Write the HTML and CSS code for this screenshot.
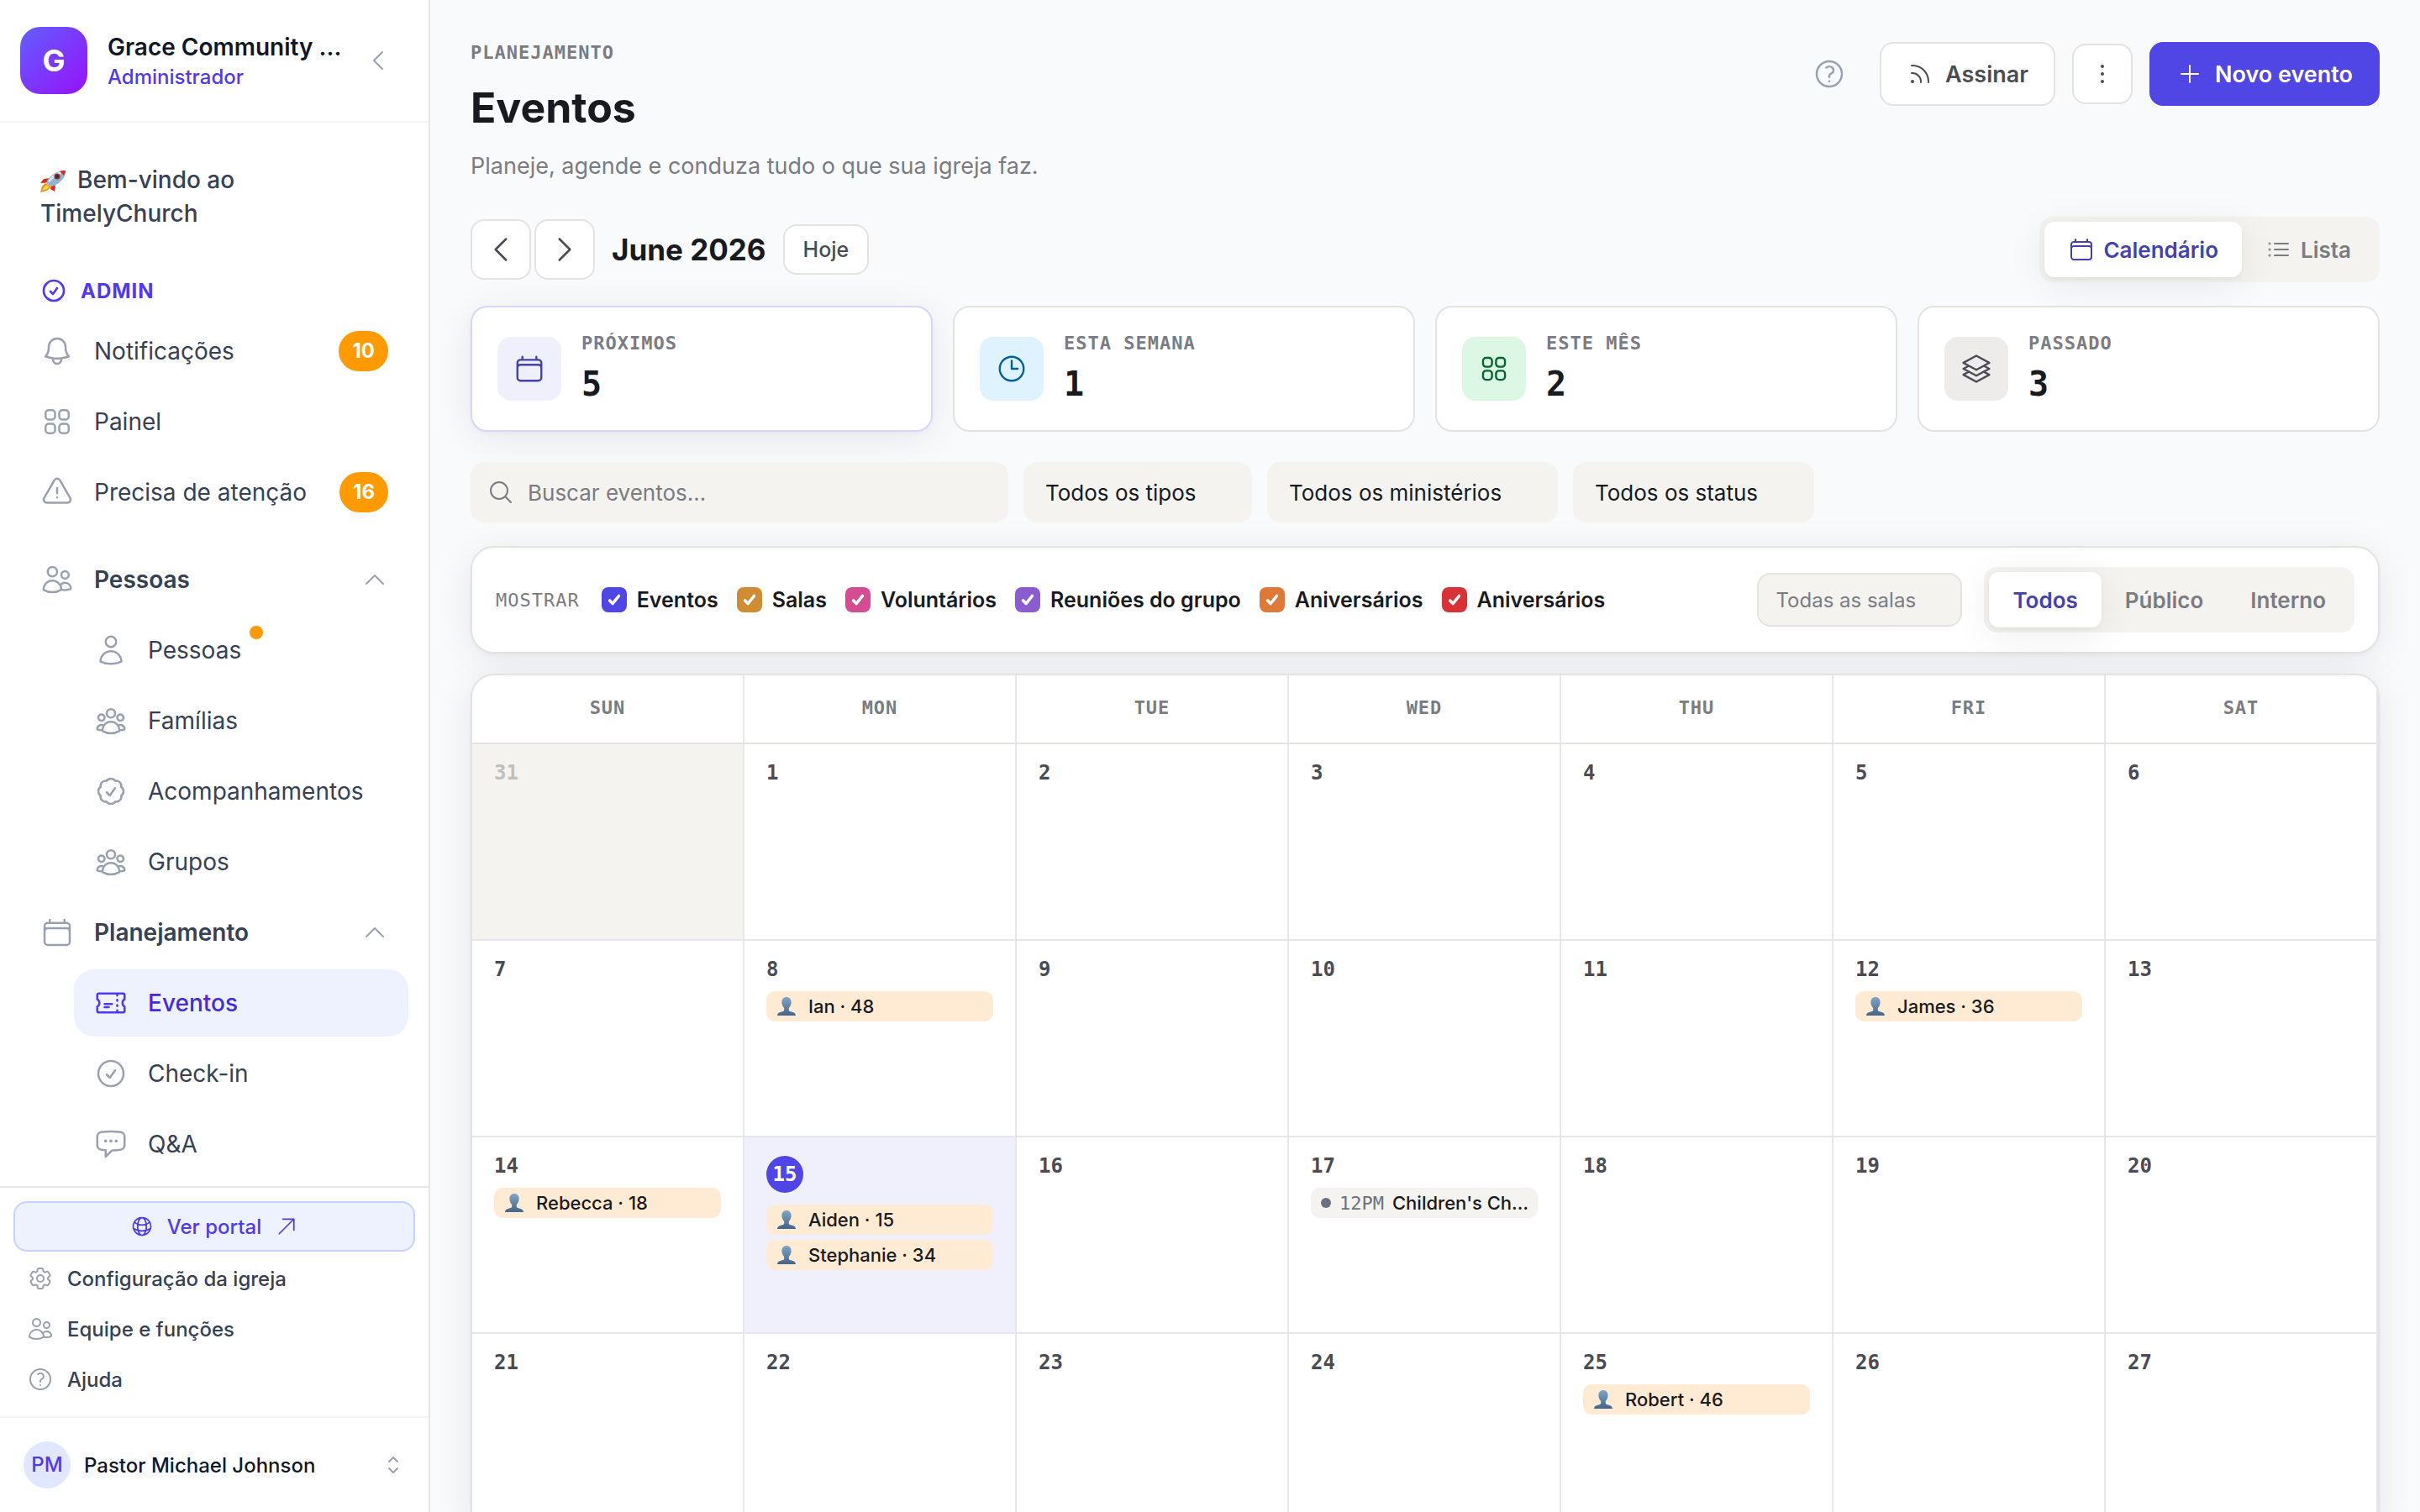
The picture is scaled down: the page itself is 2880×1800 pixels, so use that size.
FILE: index.html
```html
<!DOCTYPE html>
<html lang="pt-BR">
<head>
    <meta charset="UTF-8">
    <meta name="viewport" content="width=device-width, initial-scale=1.0">
    <title>Eventos</title>
    <link rel="stylesheet" href="styles.css">
</head>

<body>

    <!-- icon sprite -->
    <svg class="sprite" aria-hidden="true">
        <symbol id="i-bell" viewBox="0 0 24 24"><path d="M14.857 17.082a23.848 23.848 0 0 0 5.454-1.31A8.967 8.967 0 0 1 18 9.75V9A6 6 0 0 0 6 9v.75a8.967 8.967 0 0 1-2.312 6.022c1.733.64 3.56 1.085 5.455 1.31m5.714 0a24.255 24.255 0 0 1-5.714 0m5.714 0a3 3 0 1 1-5.714 0"/></symbol>
        <symbol id="i-grid" viewBox="0 0 24 24"><rect x="3.75" y="3.75" width="6.75" height="6.75" rx="2.25"/><rect x="13.5" y="3.75" width="6.75" height="6.75" rx="2.25"/><rect x="3.75" y="13.5" width="6.75" height="6.75" rx="2.25"/><rect x="13.5" y="13.5" width="6.75" height="6.75" rx="2.25"/></symbol>
        <symbol id="i-alert" viewBox="0 0 24 24"><path d="M12 9v3.75m-9.303 3.376c-.866 1.5.217 3.374 1.948 3.374h14.71c1.73 0 2.813-1.874 1.948-3.374L13.949 3.378c-.866-1.5-3.032-1.5-3.898 0L2.697 16.126ZM12 15.75h.007v.008H12v-.008Z"/></symbol>
        <symbol id="i-users" viewBox="0 0 24 24"><path d="M15 19.128a9.38 9.38 0 0 0 2.625.372 9.337 9.337 0 0 0 4.121-.952 4.125 4.125 0 0 0-7.533-2.493M15 19.128v-.003c0-1.113-.285-2.16-.786-3.07M15 19.128v.106A12.318 12.318 0 0 1 8.624 21c-2.331 0-4.512-.645-6.374-1.766l-.001-.109a6.375 6.375 0 0 1 11.964-3.07M12 6.375a3.375 3.375 0 1 1-6.75 0 3.375 3.375 0 0 1 6.75 0Zm8.25 2.25a2.625 2.625 0 1 1-5.25 0 2.625 2.625 0 0 1 5.25 0Z"/></symbol>
        <symbol id="i-user" viewBox="0 0 24 24"><path d="M15.75 6a3.75 3.75 0 1 1-7.5 0 3.75 3.75 0 0 1 7.5 0ZM4.501 20.118a7.5 7.5 0 0 1 14.998 0A17.933 17.933 0 0 1 12 21.75c-2.676 0-5.216-.584-7.499-1.632Z"/></symbol>
        <symbol id="i-group" viewBox="0 0 24 24"><path d="M18 18.72a9.094 9.094 0 0 0 3.741-.479 3 3 0 0 0-4.682-2.72m.94 3.198.001.031c0 .225-.012.447-.037.666A11.944 11.944 0 0 1 12 21c-2.17 0-4.207-.576-5.963-1.584A6.062 6.062 0 0 1 6 18.719m12 0a5.971 5.971 0 0 0-.941-3.197m0 0A5.995 5.995 0 0 0 12 12.75a5.995 5.995 0 0 0-5.058 2.772m0 0a3 3 0 0 0-4.681 2.72 8.986 8.986 0 0 0 3.74.477m.94-3.197a5.971 5.971 0 0 0-.94 3.197M15 6.75a3 3 0 1 1-6 0 3 3 0 0 1 6 0Zm6 3a2.25 2.25 0 1 1-4.5 0 2.25 2.25 0 0 1 4.5 0Zm-13.5 0a2.25 2.25 0 1 1-4.5 0 2.25 2.25 0 0 1 4.5 0Z"/></symbol>
        <symbol id="i-badge" viewBox="0 0 24 24"><path d="M9 12.75 11.25 15 15 9.75M21 12c0 1.268-.63 2.39-1.593 3.068a3.745 3.745 0 0 1-1.043 3.296 3.745 3.745 0 0 1-3.296 1.043A3.745 3.745 0 0 1 12 21c-1.268 0-2.39-.63-3.068-1.593a3.746 3.746 0 0 1-3.296-1.043 3.745 3.745 0 0 1-1.043-3.296A3.745 3.745 0 0 1 3 12c0-1.268.63-2.39 1.593-3.068a3.745 3.745 0 0 1 1.043-3.296 3.746 3.746 0 0 1 3.296-1.043A3.746 3.746 0 0 1 12 3c1.268 0 2.39.63 3.068 1.593a3.746 3.746 0 0 1 3.296 1.043 3.746 3.746 0 0 1 1.043 3.296A3.745 3.745 0 0 1 21 12Z"/></symbol>
        <symbol id="i-calendar" viewBox="0 0 24 24"><path d="M6.75 3v2.25M17.25 3v2.25M3 18.75V7.5a2.25 2.25 0 0 1 2.25-2.25h13.5A2.25 2.25 0 0 1 21 7.5v11.25m-18 0A2.25 2.25 0 0 0 5.25 21h13.5A2.25 2.25 0 0 0 21 18.75m-18 0v-7.5A2.25 2.25 0 0 1 5.25 9h13.5A2.25 2.25 0 0 1 21 11.25v7.5"/></symbol>
        <symbol id="i-ticket" viewBox="0 0 24 24"><path d="M16.5 6v.75m0 3v.75m0 3v.75m0 3V18m-9-5.25h5.25M7.5 15h3M3.375 5.25c-.621 0-1.125.504-1.125 1.125v3.026a2.999 2.999 0 0 1 0 5.198v3.026c0 .621.504 1.125 1.125 1.125h17.25c.621 0 1.125-.504 1.125-1.125v-3.026a2.999 2.999 0 0 1 0-5.198V6.375c0-.621-.504-1.125-1.125-1.125H3.375Z"/></symbol>
        <symbol id="i-check" viewBox="0 0 24 24"><path d="M9 12.75 11.25 15 15 9.75M21 12a9 9 0 1 1-18 0 9 9 0 0 1 18 0Z"/></symbol>
        <symbol id="i-chat" viewBox="0 0 24 24"><path d="M8.625 9.75a.375.375 0 1 1-.75 0 .375.375 0 0 1 .75 0Zm0 0H8.25m4.125 0a.375.375 0 1 1-.75 0 .375.375 0 0 1 .75 0Zm0 0H12m4.125 0a.375.375 0 1 1-.75 0 .375.375 0 0 1 .75 0Zm0 0h-.375m-13.5 3.01c0 1.6 1.123 2.994 2.707 3.227 1.087.16 2.185.283 3.293.369V21l4.184-4.183a1.14 1.14 0 0 1 .778-.332 48.294 48.294 0 0 0 5.83-.498c1.585-.233 2.708-1.626 2.708-3.228V6.741c0-1.602-1.123-2.995-2.707-3.228A48.394 48.394 0 0 0 12 3c-2.392 0-4.744.175-7.043.513C3.373 3.746 2.25 5.14 2.25 6.741v6.018Z"/></symbol>
        <symbol id="i-globe" viewBox="0 0 24 24"><path d="M12 21a9.004 9.004 0 0 0 8.716-6.747M12 21a9.004 9.004 0 0 1-8.716-6.747M12 21c2.485 0 4.5-4.03 4.5-9S14.485 3 12 3m0 18c-2.485 0-4.5-4.03-4.5-9S9.515 3 12 3m0 0a8.997 8.997 0 0 1 7.843 4.582M12 3a8.997 8.997 0 0 0-7.843 4.582m15.686 0A11.953 11.953 0 0 1 12 10.5c-2.998 0-5.74-1.1-7.843-2.918m15.686 0A8.959 8.959 0 0 1 21 12c0 .778-.099 1.533-.284 2.253m0 0A17.919 17.919 0 0 1 12 16.5c-3.162 0-6.133-.815-8.716-2.247m0 0A9.015 9.015 0 0 1 3 12c0-1.605.42-3.113 1.157-4.418"/></symbol>
        <symbol id="i-arrow" viewBox="0 0 24 24"><path d="m4.5 19.5 15-15m0 0H8.25m11.25 0v11.25"/></symbol>
        <symbol id="i-cog" viewBox="0 0 24 24"><path d="M9.594 3.94c.09-.542.56-.94 1.11-.94h2.593c.55 0 1.02.398 1.11.94l.213 1.281c.063.374.313.686.645.87.074.04.147.083.22.127.325.196.72.257 1.075.124l1.217-.456a1.125 1.125 0 0 1 1.37.49l1.296 2.247a1.125 1.125 0 0 1-.26 1.431l-1.003.827c-.293.241-.438.613-.43.992a7.723 7.723 0 0 1 0 .255c-.008.378.137.75.43.991l1.004.827c.424.35.534.955.26 1.43l-1.298 2.247a1.125 1.125 0 0 1-1.369.491l-1.217-.456c-.355-.133-.75-.072-1.076.124a6.47 6.47 0 0 1-.22.128c-.331.183-.581.495-.644.869l-.213 1.281c-.09.543-.56.94-1.11.94h-2.594c-.55 0-1.019-.398-1.11-.94l-.213-1.281c-.062-.374-.312-.686-.644-.87a6.52 6.52 0 0 1-.22-.127c-.325-.196-.72-.257-1.076-.124l-1.217.456a1.125 1.125 0 0 1-1.369-.49l-1.297-2.247a1.125 1.125 0 0 1 .26-1.431l1.004-.827c.292-.24.437-.613.43-.991a6.932 6.932 0 0 1 0-.255c.007-.38-.138-.751-.43-.992l-1.004-.827a1.125 1.125 0 0 1-.26-1.43l1.297-2.247a1.125 1.125 0 0 1 1.37-.491l1.216.456c.356.133.751.072 1.076-.124.072-.044.146-.086.22-.128.332-.183.582-.495.644-.869l.214-1.28Z"/><circle cx="12" cy="12" r="3"/></symbol>
        <symbol id="i-help" viewBox="0 0 24 24"><path d="M9.879 7.519c1.171-1.025 3.071-1.025 4.242 0 1.172 1.025 1.172 2.687 0 3.712-.203.179-.43.326-.67.442-.745.361-1.45.999-1.45 1.827v.75M21 12a9 9 0 1 1-18 0 9 9 0 0 1 18 0Zm-9 5.25h.008v.008H12v-.008Z"/></symbol>
        <symbol id="i-updown" viewBox="0 0 24 24"><path d="M8.25 15 12 18.75 15.75 15m-7.5-6L12 5.25 15.75 9"/></symbol>
        <symbol id="i-left" viewBox="0 0 24 24"><path d="M15.75 19.5 8.25 12l7.5-7.5"/></symbol>
        <symbol id="i-right" viewBox="0 0 24 24"><path d="m8.25 4.5 7.5 7.5-7.5 7.5"/></symbol>
        <symbol id="i-up" viewBox="0 0 24 24"><path d="m4.5 15.75 7.5-7.5 7.5 7.5"/></symbol>
        <symbol id="i-rss" viewBox="0 0 24 24"><path d="M12.75 19.5v-.75a7.5 7.5 0 0 0-7.5-7.5H4.5m0-6.75h.75c7.87 0 14.25 6.38 14.25 14.25v.75M6 18.75a.75.75 0 1 1-1.5 0 .75.75 0 0 1 1.5 0Z"/></symbol>
        <symbol id="i-dots" viewBox="0 0 24 24"><circle cx="12" cy="5.25" r=".75"/><circle cx="12" cy="12" r=".75"/><circle cx="12" cy="18.75" r=".75"/></symbol>
        <symbol id="i-plus" viewBox="0 0 24 24"><path d="M12 4.5v15m7.5-7.5h-15"/></symbol>
        <symbol id="i-list" viewBox="0 0 24 24"><path d="M8.25 6.75h12M8.25 12h12m-12 5.25h12"/><circle cx="3.75" cy="6.75" r=".375"/><circle cx="3.75" cy="12" r=".375"/><circle cx="3.75" cy="17.25" r=".375"/></symbol>
        <symbol id="i-clock" viewBox="0 0 24 24"><path d="M12 6v6h4.5m4.5 0a9 9 0 1 1-18 0 9 9 0 0 1 18 0Z"/></symbol>
        <symbol id="i-stack" viewBox="0 0 24 24"><path d="M6.429 9.75 2.25 12l4.179 2.25m0-4.5 5.571 3 5.571-3m-11.142 0L2.25 7.5 12 2.25l9.75 5.25-4.179 2.25m0 0L21.75 12l-4.179 2.25m0 0 4.179 2.25L12 21.75 2.25 16.5l4.179-2.25m11.142 0-5.571 3-5.571-3"/></symbol>
        <symbol id="i-search" viewBox="0 0 24 24"><path d="m21 21-5.197-5.197m0 0A7.5 7.5 0 1 0 5.196 5.196a7.5 7.5 0 0 0 10.607 10.607Z"/></symbol>
        <linearGradient id="bust" x1="0" y1="0" x2="0" y2="1"><stop offset="0" stop-color="#7ea6c6"/><stop offset="1" stop-color="#41658c"/></linearGradient>
        <symbol id="i-person" viewBox="0 0 24 24"><path fill="url(#bust)" stroke="none" d="M12 1c3.500 0 5.600 2.400 5.600 6 0 3-1.200 5.500-2.800 7v2.200c0 1 .8 1.600 2.200 2 3.200.9 5.800 1.500 6 4.800H1c.2-3.300 2.800-3.900 6-4.800 1.400-.4 2.200-1 2.200-2V14c-1.600-1.500-2.800-4-2.800-7C6.400 3.400 8.500 1 12 1Z"/></symbol>
        <symbol id="i-rocket" viewBox="0 0 30 26"><g stroke="none"><path fill="#d7301f" d="M12 9 4 10 0 15l7-.5zM17 16l1 3-1 6-5-3 1-5z"/><path fill="#f08a1d" d="M6 15 2 19 0 26l8-2 5-5z"/><path fill="#ffd84a" d="m7 17-3 3-2 4 6-2 3-3z"/><path fill="#8fb4cf" d="M30 0c0 7-3 12-13 18l-4 1-6-4 1-3C14 4 20 0 30 0Z"/><path fill="#d9e8f2" d="M29 1C20 1 15 4 9 13l2 1C16 8 22 5 29 1Z"/><path fill="#d7301f" d="M30 0c-3 0-5 .2-7 1l5 5c1-2 2-4 2-6Z"/><circle cx="20" cy="7" r="3.600" fill="#b3271c"/><circle cx="20" cy="7" r="2.200" fill="#26384a"/></g></symbol>
    </svg>

    <div class="app">

        <aside class="sidebar">
            <div class="brand">
                <span class="brand-logo">G</span>
                <div class="brand-text">
                    <div class="brand-name">Grace Community ...</div>
                    <div class="brand-role">Administrador</div>
                </div>
                <button class="collapse" type="button" aria-label="Recolher menu"><svg class="icon icon-sm"><use href="#i-left"/></svg></button>
            </div>

            <nav class="nav">
                <a class="welcome" href="#"><svg class="rocket"><use href="#i-rocket"/></svg>Bem-vindo ao TimelyChurch</a>
                <div class="nav-label"><svg class="icon icon-sm"><use href="#i-check"/></svg>ADMIN</div>
                <a class="nav-item" href="#"><svg class="icon"><use href="#i-bell"/></svg>Notificações<span class="count">10</span></a>
                <a class="nav-item" href="#"><svg class="icon"><use href="#i-grid"/></svg>Painel</a>
                <a class="nav-item" href="#"><svg class="icon"><use href="#i-alert"/></svg>Precisa de atenção<span class="count">16</span></a>

                <button class="nav-item nav-group first" type="button"><svg class="icon"><use href="#i-users"/></svg>Pessoas<svg class="icon icon-sm chevron"><use href="#i-up"/></svg></button>
                <a class="nav-item sub" href="#"><svg class="icon"><use href="#i-user"/></svg><span class="with-dot">Pessoas<i class="dot"></i></span></a>
                <a class="nav-item sub" href="#"><svg class="icon"><use href="#i-group"/></svg>Famílias</a>
                <a class="nav-item sub" href="#"><svg class="icon"><use href="#i-badge"/></svg>Acompanhamentos</a>
                <a class="nav-item sub" href="#"><svg class="icon"><use href="#i-group"/></svg>Grupos</a>

                <button class="nav-item nav-group" type="button"><svg class="icon"><use href="#i-calendar"/></svg>Planejamento<svg class="icon icon-sm chevron"><use href="#i-up"/></svg></button>
                <a class="nav-item sub active" href="#"><svg class="icon"><use href="#i-ticket"/></svg>Eventos</a>
                <a class="nav-item sub" href="#"><svg class="icon"><use href="#i-check"/></svg>Check-in</a>
                <a class="nav-item sub" href="#"><svg class="icon"><use href="#i-chat"/></svg>Q&amp;A</a>
            </nav>

            <div class="side-links">
                <a class="portal" href="#"><svg class="icon icon-xs"><use href="#i-globe"/></svg>Ver portal<svg class="icon icon-xs"><use href="#i-arrow"/></svg></a>
                <a class="side-link" href="#"><svg class="icon icon-sm"><use href="#i-cog"/></svg>Configuração da igreja</a>
                <a class="side-link" href="#"><svg class="icon icon-sm"><use href="#i-users"/></svg>Equipe e funções</a>
                <a class="side-link" href="#"><svg class="icon icon-sm"><use href="#i-help"/></svg>Ajuda</a>
            </div>

            <button class="account" type="button">
                <span class="avatar">PM</span>
                <span class="account-name">Pastor Michael Johnson</span>
                <svg class="icon icon-sm"><use href="#i-updown"/></svg>
            </button>
        </aside>

        <main class="main">
            <header class="page-head">
                <div>
                    <div class="eyebrow">PLANEJAMENTO</div>
                    <h1 class="title">Eventos</h1>
                    <p class="subtitle">Planeje, agende e conduza tudo o que sua igreja faz.</p>
                </div>
                <div class="actions">
                    <button class="help" type="button" aria-label="Ajuda"><svg class="icon"><use href="#i-help"/></svg></button>
                    <button class="btn" type="button"><svg class="icon icon-sm"><use href="#i-rss"/></svg>Assinar</button>
                    <button class="btn-square" type="button" aria-label="Mais"><svg class="icon icon-sm"><use href="#i-dots"/></svg></button>
                    <button class="btn btn-primary" type="button"><svg class="icon icon-sm"><use href="#i-plus"/></svg>Novo evento</button>
                </div>
            </header>

            <div class="toolbar">
                <div class="month-nav">
                    <button class="btn-square" type="button" aria-label="Mês anterior"><svg class="icon"><use href="#i-left"/></svg></button>
                    <button class="btn-square" type="button" aria-label="Próximo mês"><svg class="icon"><use href="#i-right"/></svg></button>
                </div>
                <h2 class="month">June 2026</h2>
                <button class="today-btn" type="button">Hoje</button>
                <div class="segment view-switch">
                    <button class="segment-btn on" type="button"><svg class="icon icon-sm"><use href="#i-calendar"/></svg>Calendário</button>
                    <button class="segment-btn" type="button"><svg class="icon icon-sm"><use href="#i-list"/></svg>Lista</button>
                </div>
            </div>

            <section class="stats">
                <div class="stat selected">
                    <span class="stat-icon indigo"><svg class="icon icon-md"><use href="#i-calendar"/></svg></span>
                    <div><div class="stat-label">PRÓXIMOS</div><div class="stat-value">5</div></div>
                </div>
                <div class="stat">
                    <span class="stat-icon sky"><svg class="icon icon-md"><use href="#i-clock"/></svg></span>
                    <div><div class="stat-label">ESTA SEMANA</div><div class="stat-value">1</div></div>
                </div>
                <div class="stat">
                    <span class="stat-icon green"><svg class="icon icon-md"><use href="#i-grid"/></svg></span>
                    <div><div class="stat-label">ESTE MÊS</div><div class="stat-value">2</div></div>
                </div>
                <div class="stat">
                    <span class="stat-icon stone"><svg class="icon icon-md"><use href="#i-stack"/></svg></span>
                    <div><div class="stat-label">PASSADO</div><div class="stat-value">3</div></div>
                </div>
            </section>

            <div class="filters">
                <label class="search">
                    <svg class="icon icon-sm"><use href="#i-search"/></svg>
                    <input type="search" placeholder="Buscar eventos…" aria-label="Buscar eventos">
                </label>
                <select class="filter" aria-label="Tipo"><option>Todos os tipos</option></select>
                <select class="filter" aria-label="Ministério"><option>Todos os ministérios</option></select>
                <select class="filter" aria-label="Status"><option>Todos os status</option></select>
            </div>

            <section class="layers">
                <span class="layers-label">MOSTRAR</span>
                <div class="checks">
                    <label class="check"><input class="c-events" type="checkbox" checked>Eventos</label>
                    <label class="check"><input class="c-rooms" type="checkbox" checked>Salas</label>
                    <label class="check"><input class="c-volunteers" type="checkbox" checked>Voluntários</label>
                    <label class="check"><input class="c-groups" type="checkbox" checked>Reuniões do grupo</label>
                    <label class="check"><input class="c-birthdays" type="checkbox" checked>Aniversários</label>
                    <label class="check"><input class="c-anniversaries" type="checkbox" checked>Aniversários</label>
                </div>
                <select class="room" aria-label="Sala"><option>Todas as salas</option></select>
                <div class="segment">
                    <button class="segment-btn on" type="button">Todos</button>
                    <button class="segment-btn" type="button">Público</button>
                    <button class="segment-btn" type="button">Interno</button>
                </div>
            </section>

            <div class="calendar">
                <table class="month-table">
                    <thead>
                        <tr><th>SUN</th><th>MON</th><th>TUE</th><th>WED</th><th>THU</th><th>FRI</th><th>SAT</th></tr>
                    </thead>
                    <tbody>
                        <tr>
                            <td class="outside"><div class="day">31</div></td>
                            <td><div class="day">1</div></td>
                            <td><div class="day">2</div></td>
                            <td><div class="day">3</div></td>
                            <td><div class="day">4</div></td>
                            <td><div class="day">5</div></td>
                            <td><div class="day">6</div></td>
                        </tr>
                        <tr>
                            <td><div class="day">7</div></td>
                            <td><div class="day">8</div><a class="chip birthday" href="#"><svg class="person"><use href="#i-person"/></svg>Ian · 48</a></td>
                            <td><div class="day">9</div></td>
                            <td><div class="day">10</div></td>
                            <td><div class="day">11</div></td>
                            <td><div class="day">12</div><a class="chip birthday" href="#"><svg class="person"><use href="#i-person"/></svg>James · 36</a></td>
                            <td><div class="day">13</div></td>
                        </tr>
                        <tr>
                            <td><div class="day">14</div><a class="chip birthday" href="#"><svg class="person"><use href="#i-person"/></svg>Rebecca · 18</a></td>
                            <td class="today"><div class="day">15</div><a class="chip birthday" href="#"><svg class="person"><use href="#i-person"/></svg>Aiden · 15</a><a class="chip birthday" href="#"><svg class="person"><use href="#i-person"/></svg>Stephanie · 34</a></td>
                            <td><div class="day">16</div></td>
                            <td><div class="day">17</div><a class="chip" href="#"><i class="bullet"></i><span class="time">12PM</span>Children's Ch…</a></td>
                            <td><div class="day">18</div></td>
                            <td><div class="day">19</div></td>
                            <td><div class="day">20</div></td>
                        </tr>
                        <tr>
                            <td><div class="day">21</div></td>
                            <td><div class="day">22</div></td>
                            <td><div class="day">23</div></td>
                            <td><div class="day">24</div></td>
                            <td><div class="day">25</div><a class="chip birthday" href="#"><svg class="person"><use href="#i-person"/></svg>Robert · 46</a></td>
                            <td><div class="day">26</div></td>
                            <td><div class="day">27</div></td>
                        </tr>
                    </tbody>
                </table>
            </div>
        </main>
    </div>

</body>
</html>
```
FILE: styles.css
```css
:root {
    --ink: #181a20;
    --ink-2: #4a4c54;
    --muted: #7b7c82;
    --line: #e4e3df;
    --line-cool: #e5e7eb;
    --surface: #f4f3ef;
    --primary: #4f46e5;
    --primary-ink: #4341b0;
    --mono: "DejaVu Sans Mono", monospace;
    --shadow: 0 2px 4px rgba(24, 26, 32, 0.04), 0 8px 48px rgba(24, 26, 32, 0.08);
}

* {
    box-sizing: border-box;
}

body {
    margin: 0;
    font-family: Inter, sans-serif;
    font-size: 28px;
    color: var(--ink);
    background-color: #f9fafc;
}

button,
input,
select {
    font: inherit;
    color: inherit;
    margin: 0;
}

button {
    border: 0;
    background: none;
    padding: 0;
    cursor: pointer;
}

a {
    color: inherit;
    text-decoration: none;
}

.sprite {
    position: absolute;
    width: 0;
    height: 0;
}

.icon {
    width: 40px;
    height: 40px;
    flex: none;
    fill: none;
    stroke: currentColor;
    stroke-width: 1.5;
    stroke-linecap: round;
    stroke-linejoin: round;
}

.icon-md {
    width: 38px;
    height: 38px;
}

.icon-sm {
    width: 32px;
    height: 32px;
}

.icon-xs {
    width: 28px;
    height: 28px;
}

.app {
    display: flex;
    height: 100vh;
    overflow: hidden;
}

/* sidebar */
.sidebar {
    display: flex;
    flex-direction: column;
    flex: none;
    width: 512px;
    background-color: #fff;
    border-right: 2px solid var(--line-cool);
}

.brand {
    display: flex;
    align-items: center;
    padding: 32px 32px 32px 24px;
    border-bottom: 2px solid #f3f4f6;
}

.brand-logo {
    display: flex;
    align-items: center;
    justify-content: center;
    flex: none;
    width: 80px;
    height: 80px;
    margin-right: 24px;
    border-radius: 24px;
    background: linear-gradient(135deg, #615fff, #9810fa);
    color: #fff;
    font-size: 36px;
    font-weight: 700;
}

.brand-text {
    flex: 1;
    min-width: 0;
    padding-top: 4px;
}

.brand-name {
    white-space: nowrap;
    line-height: 36px;
    font-weight: 600;
    color: #101828;
}

.brand-role {
    font-size: 24px;
    line-height: 36px;
    font-weight: 500;
    color: #4f39f6;
}

.collapse {
    display: flex;
    padding: 12px;
    color: #99a1af;
}

.nav {
    flex: 1;
    min-height: 0;
    overflow: hidden;
    padding: 24px;
    color: #364153;
}

.welcome {
    display: block;
    padding: 24px;
    line-height: 40px;
    font-weight: 500;
}

.rocket {
    width: 30px;
    height: 26px;
    margin-right: 14px;
    vertical-align: middle;
}

.nav-label {
    display: flex;
    align-items: center;
    gap: 16px;
    height: 48px;
    margin: 24px 0 8px;
    padding: 0 24px;
    font-size: 24px;
    font-weight: 700;
    letter-spacing: 1px;
    color: #4f39f6;
}

.nav-label .icon {
    stroke-width: 2;
}

.nav-item {
    display: flex;
    align-items: center;
    gap: 24px;
    width: 100%;
    height: 80px;
    margin-bottom: 4px;
    padding: 0 24px;
    border-radius: 24px;
    text-align: left;
}

.nav-item .icon {
    color: #99a1af;
}

.nav-group {
    font-weight: 600;
}

.nav-group.first {
    margin-top: 24px;
}

.chevron {
    margin-left: auto;
}

.nav-item.sub {
    width: auto;
    margin-left: 64px;
}

.nav-item.active {
    background-color: #eef2ff;
    color: #432dd7;
    font-weight: 500;
}

.nav-item.active .icon {
    color: #4f39f6;
}

.count {
    margin-left: auto;
    padding: 0 16px;
    border-radius: 24px;
    background-color: #ff9a00;
    color: #fff;
    font-size: 24px;
    line-height: 48px;
    font-weight: 700;
}

.with-dot {
    position: relative;
}

.dot {
    position: absolute;
    top: -12px;
    right: -26px;
    width: 16px;
    height: 16px;
    border-radius: 50%;
    background-color: #ff9a00;
}

.side-links {
    padding: 16px 16px 14px;
    border-top: 2px solid var(--line-cool);
    font-size: 24px;
    font-weight: 500;
    color: #364153;
}

.portal {
    display: flex;
    align-items: center;
    justify-content: center;
    gap: 16px;
    height: 60px;
    margin-bottom: 2px;
    border: 2px solid #c6d2ff;
    border-radius: 16px;
    background-color: #eef2ff;
    color: #4f39f6;
}

.side-link {
    display: flex;
    align-items: center;
    gap: 16px;
    height: 60px;
    padding: 0 16px;
}

.side-link .icon {
    color: #99a1af;
}

.account {
    display: flex;
    align-items: center;
    gap: 16px;
    height: 114px;
    padding: 0 26px 0 28px;
    border-top: 2px solid #f3f4f6;
    text-align: left;
    font-size: 24px;
    font-weight: 500;
    color: #101828;
}

.account .icon {
    color: #99a1af;
}

.avatar {
    width: 56px;
    border-radius: 50%;
    background-color: #e0e7ff;
    color: #4f39f6;
    line-height: 56px;
    text-align: center;
}

.account-name {
    flex: 1;
}

/* main */
.main {
    flex: 1;
    min-width: 0;
    overflow: hidden;
    padding: 48px;
}

.page-head {
    display: flex;
    justify-content: space-between;
    margin-bottom: 40px;
}

.eyebrow {
    font-family: var(--mono);
    font-size: 22px;
    line-height: 30px;
    font-weight: 700;
    letter-spacing: 1px;
    color: var(--muted);
}

.title {
    margin: 20px 0;
    font-size: 50px;
    line-height: 60px;
    font-weight: 700;
}

.subtitle {
    margin: 0;
    font-size: 27px;
    line-height: 40px;
    color: var(--muted);
}

.actions {
    display: flex;
    align-items: center;
    gap: 20px;
    height: 80px;
}

.help {
    display: flex;
    padding: 0 20px;
    color: #99a1af;
}

.btn {
    display: flex;
    align-items: center;
    gap: 14px;
    height: 76px;
    padding: 0 30px;
    border: 2px solid var(--line);
    border-radius: 16px;
    background-color: #fff;
    color: var(--ink-2);
    font-size: 27px;
    font-weight: 600;
}

.btn-primary {
    border-color: var(--primary);
    background-color: var(--primary);
    color: #fff;
}

.btn-square {
    display: flex;
    align-items: center;
    justify-content: center;
    width: 72px;
    height: 72px;
    border: 2px solid var(--line);
    border-radius: 16px;
    background-color: #fff;
    color: var(--ink-2);
}

.toolbar {
    display: flex;
    align-items: center;
    gap: 20px;
    margin-bottom: 28px;
}

.month-nav {
    display: flex;
    gap: 4px;
}

.month {
    margin: 0;
    font-size: 35px;
    line-height: 48px;
    font-weight: 700;
}

.today-btn {
    height: 60px;
    padding: 0 22px;
    border: 2px solid var(--line);
    border-radius: 16px;
    background-color: #fff;
    color: var(--ink-2);
    font-size: 25px;
    font-weight: 500;
}

.segment {
    display: flex;
    padding: 6px;
    border-radius: 16px;
    background-color: var(--surface);
}

.segment-btn {
    display: flex;
    align-items: center;
    gap: 10px;
    height: 66px;
    padding: 0 28px;
    border-radius: 12px;
    color: var(--muted);
    font-size: 26px;
    font-weight: 600;
}

.segment-btn.on {
    background-color: #fff;
    color: var(--primary-ink);
    box-shadow: var(--shadow);
}

.view-switch {
    margin-left: auto;
}

.stats {
    display: grid;
    grid-template-columns: repeat(4, 1fr);
    gap: 24px;
    margin-bottom: 36px;
}

.stat {
    display: flex;
    align-items: center;
    gap: 24px;
    height: 150px;
    padding: 0 30px;
    border: 2px solid var(--line);
    border-radius: 20px;
    background-color: #fff;
}

.stat.selected {
    border-color: #d8d6fa;
    box-shadow: var(--shadow);
}

.stat-icon {
    display: flex;
    align-items: center;
    justify-content: center;
    width: 76px;
    height: 76px;
    border-radius: 16px;
}

.indigo {
    background-color: #f0f0fd;
    color: var(--primary-ink);
}

.sky {
    background-color: #dff3ff;
    color: #0060a0;
}

.green {
    background-color: #dcf7e3;
    color: #026630;
}

.stone {
    background-color: #edecea;
    color: var(--ink-2);
}

.stat-label {
    font-family: var(--mono);
    font-size: 22px;
    line-height: 24px;
    font-weight: 700;
    letter-spacing: 1px;
    color: var(--muted);
}

.stat-value {
    margin-top: 12px;
    font-family: var(--mono);
    font-size: 40px;
    line-height: 48px;
    font-weight: 700;
}

.filters {
    display: flex;
    gap: 18px;
    margin-bottom: 28px;
}

.search {
    display: flex;
    align-items: center;
    gap: 16px;
    width: 640px;
    height: 72px;
    padding: 0 20px;
    border-radius: 16px;
    background-color: var(--surface);
    color: var(--muted);
}

.search input {
    flex: 1;
    min-width: 0;
    padding: 0;
    border: 0;
    outline: 0;
    background: none;
    font-size: 26px;
}

.search input::placeholder {
    color: var(--muted);
    opacity: 1;
}

.filter {
    appearance: none;
    height: 72px;
    padding: 0 66px 0 26px;
    border: 0;
    border-radius: 16px;
    background-color: var(--surface);
    font-size: 26px;
}

.layers {
    display: flex;
    align-items: center;
    gap: 26px;
    height: 128px;
    margin-bottom: 24px;
    padding: 0 28px;
    border: 2px solid var(--line);
    border-radius: 28px;
    background-color: #fff;
    box-shadow: var(--shadow);
}

.layers-label {
    font-family: var(--mono);
    font-size: 22px;
    letter-spacing: 1px;
    color: var(--muted);
}

.checks {
    display: flex;
    flex: 1;
    gap: 22px;
}

.check {
    display: flex;
    align-items: center;
    gap: 12px;
    font-size: 25px;
    font-weight: 600;
}

.check input {
    appearance: none;
    width: 30px;
    height: 30px;
    border-radius: 8px;
    background: center / 18px 18px no-repeat url("data:image/svg+xml,%3Csvg xmlns='http://www.w3.org/2000/svg' viewBox='0 0 20 20' fill='none' stroke='white' stroke-width='4' stroke-linecap='round' stroke-linejoin='round'%3E%3Cpath d='M4 11l4 4 8-10'/%3E%3C/svg%3E");
}

.check .c-events {
    background-color: var(--primary);
}

.check .c-rooms {
    background-color: #d08c32;
}

.check .c-volunteers {
    background-color: #d44d92;
}

.check .c-groups {
    background-color: #8b5ccf;
}

.check .c-birthdays {
    background-color: #e07838;
}

.check .c-anniversaries {
    background-color: #d93236;
}

.room {
    appearance: none;
    width: 244px;
    height: 64px;
    padding: 0 20px;
    border: 2px solid var(--line);
    border-radius: 16px;
    background-color: var(--surface);
    color: var(--muted);
    font-size: 24px;
}

/* calendar */
.calendar {
    overflow: hidden;
    border: 2px solid var(--line);
    border-radius: 28px;
    background-color: #fff;
    box-shadow: var(--shadow);
}

.month-table {
    width: 100%;
    table-layout: fixed;
    border-collapse: separate;
    border-spacing: 0;
}

.month-table th {
    height: 82px;
    padding: 0 0 4px;
    border-right: 2px solid var(--line-cool);
    border-bottom: 2px solid var(--line);
    font-family: var(--mono);
    font-size: 22px;
    font-weight: 700;
    letter-spacing: 1px;
    color: var(--muted);
}

.month-table td {
    height: 234px;
    padding: 22px 26px;
    border-right: 2px solid var(--line-cool);
    border-bottom: 2px solid var(--line-cool);
    vertical-align: top;
}

.month-table .outside {
    background-color: var(--surface);
}

.month-table .today {
    background-color: #f0f0fd;
}

.day {
    margin-bottom: 14px;
    font-family: var(--mono);
    font-size: 24px;
    line-height: 24px;
    font-weight: 700;
    color: var(--ink-2);
}

.outside .day {
    color: #bfbfbf;
}

.today .day {
    width: 44px;
    border-radius: 50%;
    background-color: var(--primary);
    color: #fff;
    line-height: 44px;
    text-align: center;
}

.chip {
    display: flex;
    align-items: center;
    gap: 10px;
    height: 36px;
    margin-bottom: 6px;
    padding: 0 12px;
    border-radius: 10px;
    background-color: var(--surface);
    font-size: 22px;
    font-weight: 500;
    white-space: nowrap;
}

.birthday {
    gap: 14px;
    background-color: #ffebd3;
}

.person {
    width: 24px;
    height: 24px;
}

.bullet {
    flex: none;
    width: 12px;
    height: 12px;
    border-radius: 50%;
    background-color: #6a7282;
}

.time {
    font-family: var(--mono);
    color: #6a7282;
}
```
